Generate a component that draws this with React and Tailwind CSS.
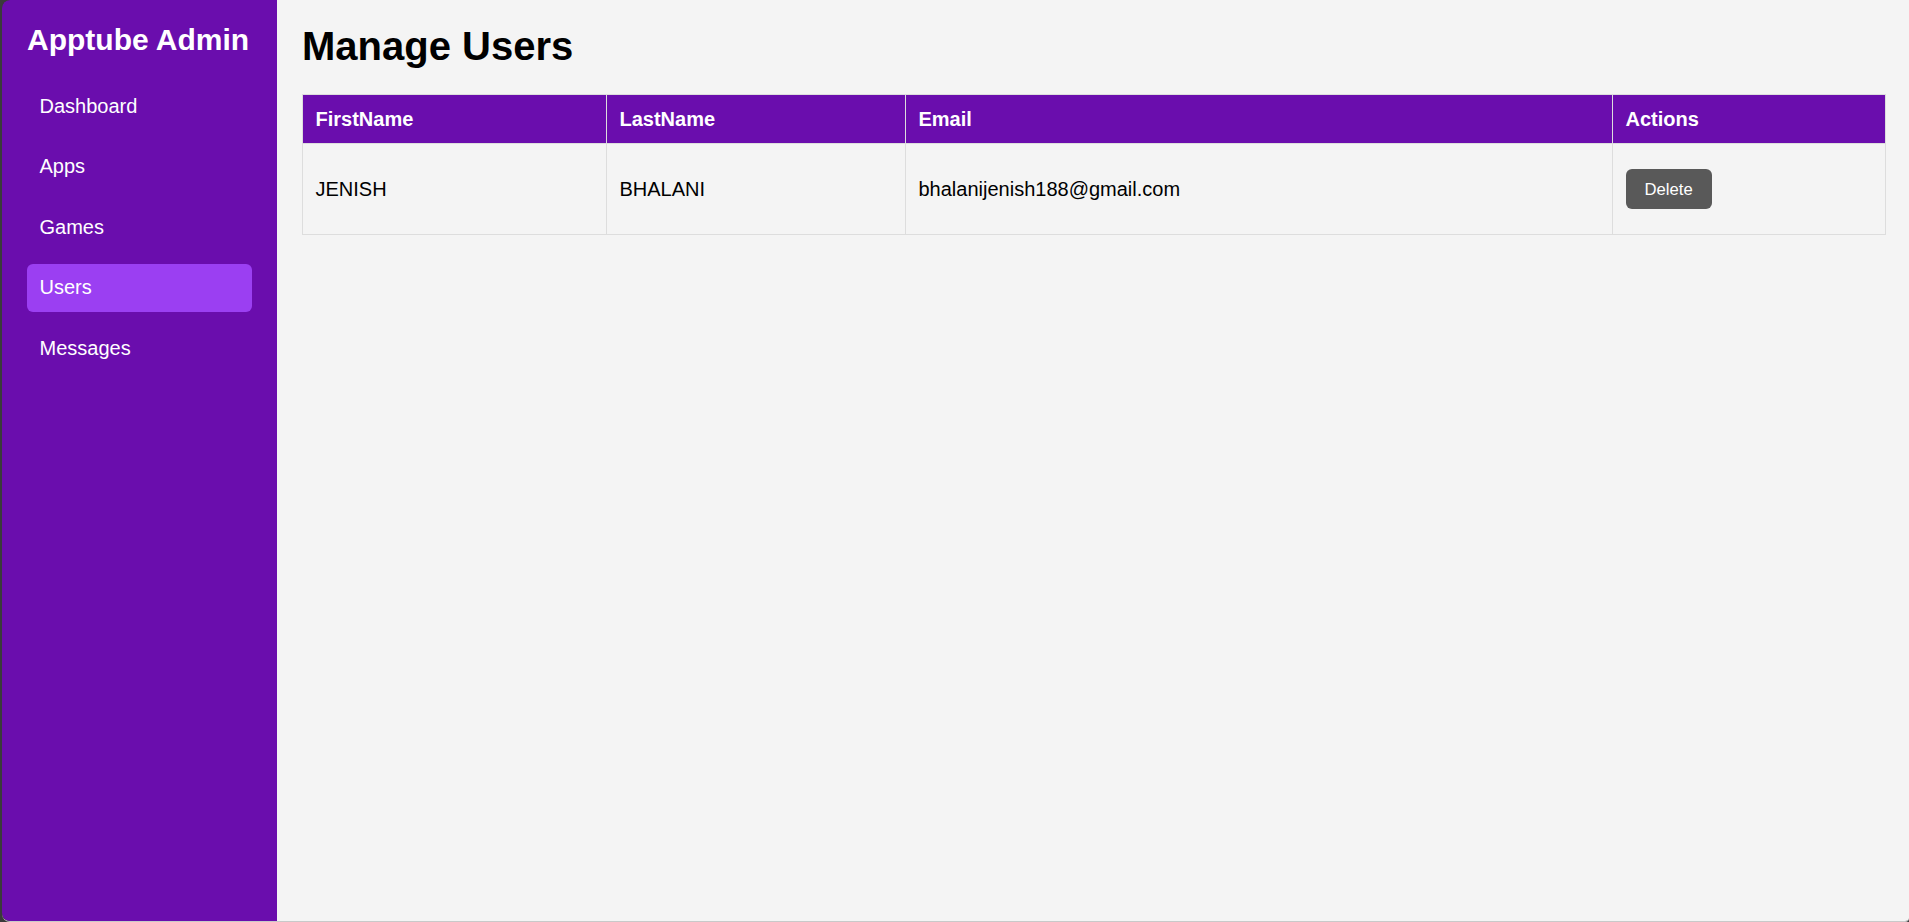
import React from 'react';

const navItems = ['Dashboard', 'Apps', 'Games', 'Users', 'Messages'];

const users = [
  { firstName: 'JENISH', lastName: 'BHALANI', email: 'bhalanijenish188@gmail.com' },
];

function Sidebar() {
  return (
    <aside className="w-[275px] shrink-0 bg-[#6a0dad] text-white px-[25px] pt-[23px] rounded-tl-[8px] rounded-bl-[8px]">
      <h2 className="text-[30px] font-bold leading-[normal] mb-[25px]">Apptube Admin</h2>
      <nav className="flex flex-col gap-[12.5px]">
        {navItems.map((item) => (
          <a
            key={item}
            href="#"
            className={
              'block text-[20px] leading-[23px] py-[12.5px] px-[12.5px] rounded-[6px] ' +
              (item === 'Users' ? 'bg-[#9b3ff2]' : '')
            }
          >
            {item}
          </a>
        ))}
      </nav>
    </aside>
  );
}

export default function App() {
  return (
    <div
      className="h-screen overflow-hidden bg-[#3a3a3a] pl-[2px] flex"
      style={{ fontFamily: '"Liberation Sans", Arial, sans-serif' }}
    >
      <div className="flex flex-1 border-b border-[#c9c9c9] rounded-l-[8px] rounded-br-[4px] overflow-hidden">
        <Sidebar />
        <main className="flex-1 bg-[#f4f4f4] pl-[25px] pr-[23px] pt-[24px]">
          <h1 className="text-[40px] font-bold leading-[normal] text-black mb-[25px]">Manage Users</h1>
          <table className="w-full border-collapse text-[20px] text-black">
            <thead>
              <tr className="bg-[#6a0dad] text-white">
                <th className="w-[304px] border border-[#ddd] px-[12.5px] py-[12.5px] text-left font-bold leading-[23px]">FirstName</th>
                <th className="w-[299px] border border-[#ddd] px-[12.5px] py-[12.5px] text-left font-bold leading-[23px]">LastName</th>
                <th className="w-[707px] border border-[#ddd] px-[12.5px] py-[12.5px] text-left font-bold leading-[23px]">Email</th>
                <th className="border border-[#ddd] px-[12.5px] py-[12.5px] text-left font-bold leading-[23px]">Actions</th>
              </tr>
            </thead>
            <tbody>
              {users.map((u) => (
                <tr key={u.email}>
                  <td className="border border-[#ddd] px-[12.5px] py-[12.5px] leading-[23px]">{u.firstName}</td>
                  <td className="border border-[#ddd] px-[12.5px] py-[12.5px] leading-[23px]">{u.lastName}</td>
                  <td className="border border-[#ddd] px-[12.5px] py-[12.5px] leading-[23px]">{u.email}</td>
                  <td className="border border-[#ddd] px-[12.5px] py-[12.5px]">
                    <button className="block my-[12.5px] h-[40px] px-[19px] bg-[#595959] text-white text-[16.67px] rounded-[6px]">
                      Delete
                    </button>
                  </td>
                </tr>
              ))}
            </tbody>
          </table>
        </main>
      </div>
    </div>
  );
}
